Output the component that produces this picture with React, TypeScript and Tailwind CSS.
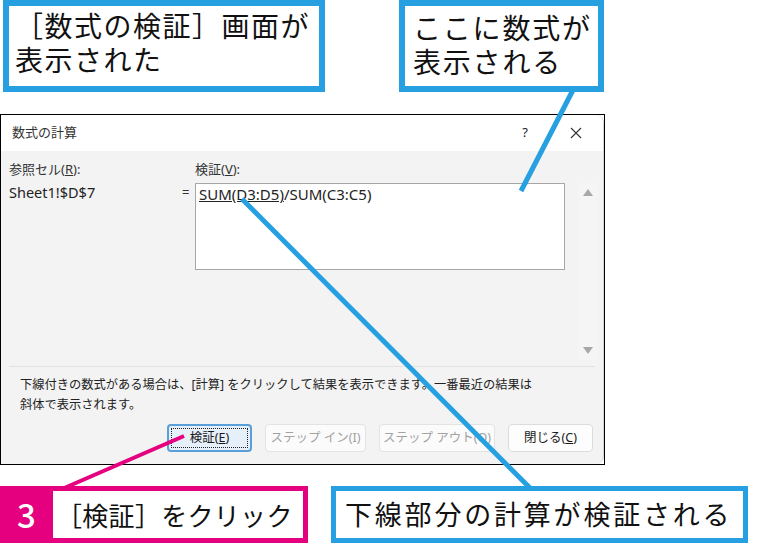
import React from "react";

const jp = "font-['Noto_Sans','Noto_Sans_CJK_JP',sans-serif]";
const big = "font-['Noto_Sans_CJK_JP',sans-serif]";

function DialogButton({
  label,
  hot,
  width,
  primary,
  disabled,
}: {
  label: string;
  hot: string;
  width: string;
  primary?: boolean;
  disabled?: boolean;
}) {
  if (primary) {
    return (
      <div
        className={`${width} h-[28px] rounded-[4px] border-[2px] border-[#5b9fd8] bg-[#e6f0fa] p-[2px]`}
      >
        <div className="flex h-full w-full items-center justify-center border border-dotted border-[#222] text-[12.5px] text-[#1a1a1a]">
          {label}(<span className="underline">{hot}</span>)
        </div>
      </div>
    );
  }
  return (
    <div
      className={`${width} flex h-[28px] items-center justify-center rounded-[4px] border text-[12.5px] ${
        disabled
          ? "border-[#e3e3e3] bg-[#fbfbfb] text-[#a2a2a2]"
          : "border-[#dcdcdc] bg-[#fdfdfd] text-[#1a1a1a]"
      }`}
    >
      {label}(<span className={disabled ? "" : "underline"}>{hot}</span>)
    </div>
  );
}

export default function App() {
  return (
    <div className="relative h-[545px] w-[783px] overflow-hidden bg-white">
      {/* top callouts */}
      <div className="flex h-[92px]">
        <div
          className={`ml-[3px] flex w-[322px] flex-col whitespace-nowrap border-[6px] border-[#27a0e2] bg-white pl-[6px] pt-[2px] text-[28px] leading-[34px] tracking-[1.5px] text-[#111] ${big}`}
        >
          <div className="h-[34px]">［数式の検証］画面が</div>
          <div className="h-[34px]">表示された</div>
        </div>
        <div
          className={`ml-[74px] flex w-[205px] flex-col whitespace-nowrap border-[6px] border-[#27a0e2] bg-white pl-[8px] pt-[4px] text-[28px] leading-[34px] tracking-[1.8px] text-[#111] ${big}`}
        >
          <div className="h-[34px]">ここに数式が</div>
          <div className="h-[34px]">表示される</div>
        </div>
      </div>

      {/* dialog */}
      <div className={`mt-[22px] h-[351px] w-[605px] border border-black ${jp}`}>
        <div className="flex h-full flex-col overflow-hidden rounded-tr-[8px] rounded-br-[8px] rounded-tl-[6px] border-r border-[#d6d6d6] bg-[#f3f3f3]">
          <div className="flex h-[36px] items-center bg-white pl-[11px] text-[13px] text-[#333]">
            <span>数式の計算</span>
            <span className="ml-auto mr-[42px] text-[13px] text-[#222]">?</span>
            <svg width="12" height="12" viewBox="0 0 12 12" className="mr-[21px]">
              <path d="M1 1 L11 11 M11 1 L1 11" stroke="#333" strokeWidth="1.1" />
            </svg>
          </div>

          <div className="flex pl-[8px] pt-[9px] text-[13px] leading-[18px] text-[#333]">
            <div className="w-[186px]">
              参照セル(<span className="underline">R</span>):
            </div>
            <div>
              検証(<span className="underline">V</span>):
            </div>
          </div>

          <div className="mt-[5px] flex items-start pl-[8px]">
            <div className="w-[173px] text-[14.5px] leading-[18px] text-[#222]">Sheet1!$D$7</div>
            <div className="w-[13px] text-[13px] leading-[18px] text-[#333]">=</div>
            <div className="h-[87px] w-[370px] border border-[#a6a6a6] bg-white pl-[3px] pt-[1px] text-[15px] leading-[18px] text-[#222]">
              <span className="underline">SUM(D3:D5)</span>/SUM(C3:C5)
            </div>
            <div className="ml-[12px] flex h-[177px] w-[22px] flex-col items-center justify-between bg-[#f5f5f5] py-[6px]">
              <svg width="10" height="7" viewBox="0 0 10 7">
                <path d="M5 0 L10 7 L0 7 Z" fill="#a8a8a8" />
              </svg>
              <svg width="10" height="7" viewBox="0 0 10 7">
                <path d="M0 0 L10 0 L5 7 Z" fill="#a8a8a8" />
              </svg>
            </div>
          </div>

          <div className="mx-[8px] mt-[6px] h-px bg-[#e2e2e2]" />

          <div className="mt-[8px] pl-[19px] text-[12.25px] leading-[20px] text-[#222]">
            <div>下線付きの数式がある場合は、[計算] をクリックして結果を表示できます。一番最近の結果は</div>
            <div>斜体で表示されます。</div>
          </div>

          <div className="ml-[166px] mt-[9px] flex gap-[13px]">
            <DialogButton label="検証" hot="E" width="w-[85px]" primary />
            <DialogButton label="ステップ イン" hot="I" width="w-[101px]" disabled />
            <DialogButton label="ステップ アウト" hot="O" width="w-[116px]" disabled />
            <DialogButton label="閉じる" hot="C" width="w-[85px]" />
          </div>
        </div>
      </div>

      {/* bottom labels */}
      <div className="mt-[21px] flex h-[57px]">
        <div className="flex w-[308px] bg-[#e4007f] p-[5px] pl-0">
          <div className={`flex w-[53px] items-center justify-center text-[33px] font-medium text-white ${big}`}>
            3
          </div>
          <div
            className={`flex flex-1 items-center whitespace-nowrap bg-white pl-[3px] text-[26px] tracking-[0.3px] text-[#111] ${big}`}
          >
            ［検証］をクリック
          </div>
        </div>
        <div
          className={`ml-[23px] flex w-[417px] items-center whitespace-nowrap border-[5px] border-[#27a0e2] bg-white pl-[9px] text-[27px] tracking-[2.8px] text-[#111] ${big}`}
        >
          下線部分の計算が検証される
        </div>
      </div>

      {/* leader lines */}
      <svg className="pointer-events-none absolute left-0 top-0" width="783" height="545" viewBox="0 0 783 545">
        <line x1="573" y1="90" x2="521" y2="191" stroke="#27a0e2" strokeWidth="5" />
        <line x1="242" y1="199" x2="531" y2="489" stroke="#27a0e2" strokeWidth="5" />
        <line x1="184" y1="436" x2="62" y2="489" stroke="#e4007f" strokeWidth="4" />
      </svg>
    </div>
  );
}
